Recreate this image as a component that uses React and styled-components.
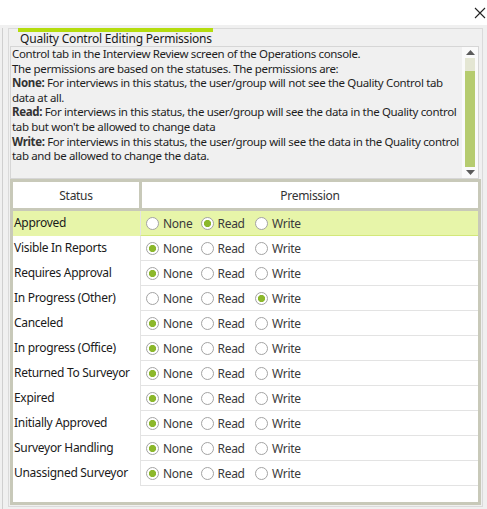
import React from 'react';
import styled, { createGlobalStyle } from 'styled-components';

const GlobalStyle = createGlobalStyle`
html, body {
margin: 0;
padding: 0;
background: #ffffff;
}
body {
font-family: "Noto Sans", "Open Sans", sans-serif;
font-size: 12px;
letter-spacing: -0.3px;
color: #1e1e1e;
}
`

const TitleBar = styled.div`
height: 25px;
display: flex;
justify-content: flex-end;
align-items: center;
padding-right: 1px;
background: #ffffff;
`
const CloseButton = styled.button`
width: 12px;
height: 12px;
padding: 0;
border: none;
background: transparent;
display: flex;
svg { display: block; }
`
const Panel = styled.div`
background: #f0f0f0;
height: 484px;
box-sizing: border-box;
padding: 3px 4px 0 2px;
display: flex;
`
const Frame = styled.div`
flex: 1;
min-width: 0;
display: flex;
border-left: 1px solid #cfcfcf;
padding-left: 5px;
`
const GroupBox = styled.div`
flex: 1;
min-width: 0;
display: flex;
flex-direction: column;
border: 1px solid #dadada;
height: 477px;
`
const Tab = styled.div`
margin: -1px 0 0 9px;
width: 193px;
border-top: 4px solid #b4dc0e;
padding-left: 2px;
height: 14px;
line-height: 14px;
letter-spacing: -0.2px;
color: #1a1a1a;
white-space: nowrap;
`
const TextBox = styled.div`
margin: 0 3px 0 1px;
height: 133px;
box-sizing: border-box;
border: 1px solid #d6d6d6;
display: flex;
`
const Description = styled.div`
flex: 1;
min-width: 0;
overflow: hidden;
padding: 0 0 0 1px;
font-size: 11.5px;
letter-spacing: -0.35px;
line-height: 14.6px;
white-space: nowrap;
color: #1e1e1e;
b { font-weight: 700; color: #333; }
`
const ScrollBar = styled.div`
width: 16px;
display: flex;
flex-direction: column;
align-items: center;
background: #fafafa;
`
const Arrow = styled.div`
height: 12px;
display: flex;
align-items: center;
justify-content: center;
`
const Track = styled.div`
flex: 1;
width: 10px;
display: flex;
flex-direction: column;
background: #e4e6d3;
`
const Thumb = styled.div`
margin-top: 13px;
height: 96px;
background: #b6cc6f;
`
const Table = styled.div`
margin: 0 1px;
height: 326px;
box-sizing: border-box;
border: 3px solid #c8c9b9;
background: #ffffff;
`
const HeaderRow = styled.div`
display: grid;
grid-template-columns: 126px 1fr;
column-gap: 3px;
background: #c8c9b9;
padding-bottom: 3px;
`
const HeaderCell = styled.div`
background: #ffffff;
height: 26px;
display: flex;
align-items: center;
justify-content: center;
color: #333333;
`
const Row = styled.div`
display: grid;
grid-template-columns: 127px 1fr;
height: 25px;
background: ${p => (p.$selected ? '#e7f5a9' : '#ffffff')};
`
const StatusCell = styled.div`
display: flex;
align-items: center;
padding: 0 0 2px 1px;
color: #1a1a1a;
white-space: nowrap;
`
const PermCell = styled.div`
display: flex;
align-items: center;
padding-left: 5px;
border-left: 1px solid #e3e3e3;
border-bottom: 1px solid ${p => (p.$selected ? '#d3e87a' : '#e3e3e3')};
`
const Option = styled.label`
display: inline-flex;
align-items: center;
gap: 4px;
width: 54.5px;
color: #3a3a3a;
`
const Radio = styled.input`
appearance: none;
margin: 0;
flex: none;
width: 13px;
height: 13px;
box-sizing: border-box;
border: 1px solid #a3a3a3;
border-radius: 50%;
background: #ffffff;
&:checked {
background: radial-gradient(circle, #8cb82c 0 3.3px, #ffffff 3.9px);
}
`

const statuses = [
	['Approved', 'Read'],
	['Visible In Reports', 'None'],
	['Requires Approval', 'None'],
	['In Progress (Other)', 'Write'],
	['Canceled', 'None'],
	['In progress (Office)', 'None'],
	['Returned To Surveyor', 'None'],
	['Expired', 'None'],
	['Initially Approved', 'None'],
	['Surveyor Handling', 'None'],
	['Unassigned Surveyor', 'None'],
]

const Triangle = ({ down }) => (
	<svg width="9" height="5" viewBox="0 0 9 5">
		<path d={down ? 'M0 0 H9 L4.5 5 Z' : 'M0 5 H9 L4.5 0 Z'} fill="#5b5b5b" />
	</svg>
)

export default function App() {
	return (
		<>
			<GlobalStyle />
			<TitleBar>
				<CloseButton aria-label="Close">
					<svg width="12" height="12" viewBox="0 0 12 12">
						<path d="M1 1 L11 11 M11 1 L1 11" stroke="#222" strokeWidth="1.1" />
					</svg>
				</CloseButton>
			</TitleBar>
			<Panel>
				<Frame>
					<GroupBox>
						<Tab>Quality Control Editing Permissions</Tab>
						<TextBox>
							<Description>
								Control tab in the Interview Review screen of the Operations console.<br />
								The permissions are based on the statuses. The permissions are:<br />
								<b>None:</b> For interviews in this status, the user/group will not see the Quality Control tab<br />
								data at all.<br />
								<b>Read:</b> For interviews in this status, the user/group will see the data in the Quality control<br />
								tab but won't be allowed to change data<br />
								<b>Write:</b> For interviews in this status, the user/group will see the data in the Quality control<br />
								tab and be allowed to change the data.
							</Description>
							<ScrollBar>
								<Arrow><Triangle /></Arrow>
								<Track><Thumb /></Track>
								<Arrow><Triangle down /></Arrow>
							</ScrollBar>
						</TextBox>
						<Table>
							<HeaderRow>
								<HeaderCell>Status</HeaderCell>
								<HeaderCell>Premission</HeaderCell>
							</HeaderRow>
							{statuses.map(([name, value], i) => (
								<Row key={name} $selected={i === 0}>
									<StatusCell>{name}</StatusCell>
									<PermCell $selected={i === 0}>
										{['None', 'Read', 'Write'].map(opt => (
											<Option key={opt}>
												<Radio type="radio" name={'perm' + i} defaultChecked={opt === value} />
												{opt}
											</Option>
										))}
									</PermCell>
								</Row>
							))}
						</Table>
					</GroupBox>
				</Frame>
			</Panel>
		</>
	)
}
